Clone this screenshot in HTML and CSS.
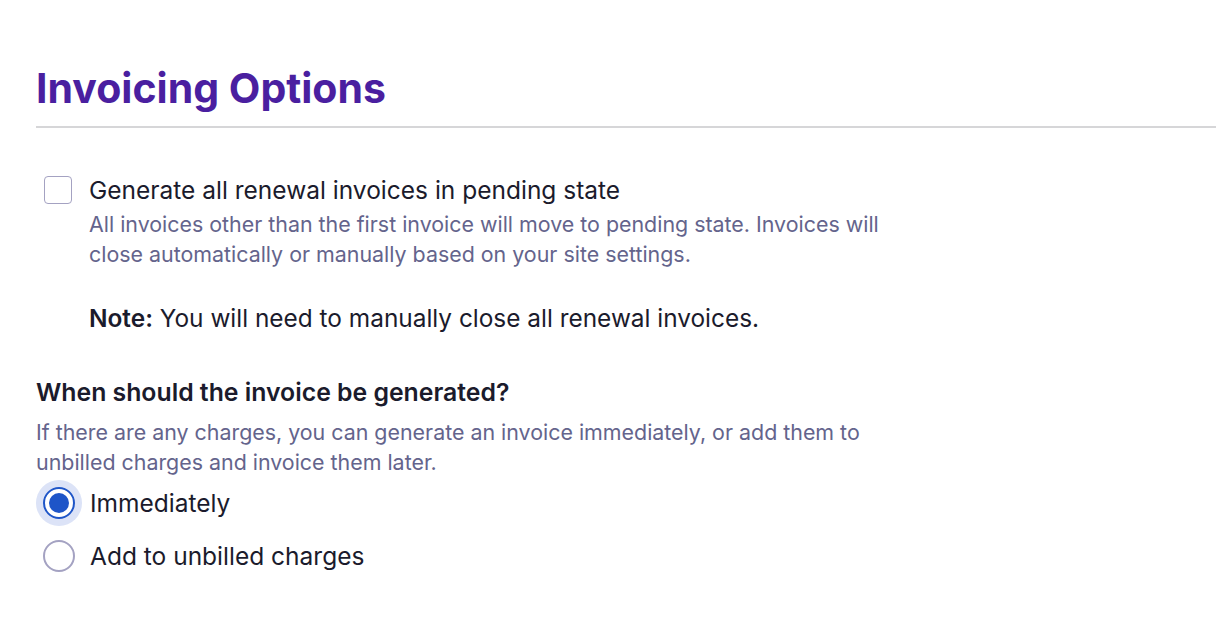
FILE: index.html
```html
<!DOCTYPE html>
<html lang="en">
<head>
  <meta charset="UTF-8" />
  <meta name="viewport" content="width=device-width, initial-scale=1.0"/>
  <title>Invoicing Options</title>
  <link rel="stylesheet" href="styles.css">
</head>
<body>

  <div class="page">
    <h1 class="title">Invoicing Options</h1>

    <div class="check-row">
      <span class="checkbox"></span>
      <div class="check-body">
        <div class="check-label">Generate all renewal invoices in pending state</div>
        <p class="hint">All invoices other than the first invoice will move to pending state. Invoices will close automatically or manually based on your site settings.</p>
        <p class="note"><b>Note:</b> You will need to manually close all renewal invoices.</p>
      </div>
    </div>

    <div class="question">
      <h2>When should the invoice be generated?</h2>
      <p class="hint">If there are any charges, you can generate an invoice immediately, or add them to unbilled charges and invoice them later.</p>

      <div class="radio-row">
        <span class="radio checked"><span class="dot"></span></span>
        <span class="radio-label">Immediately</span>
      </div>
      <div class="radio-row">
        <span class="radio"></span>
        <span class="radio-label">Add to unbilled charges</span>
      </div>
    </div>
  </div>

</body>
</html>
```

FILE: styles.css
```css
body {
  font-family: Inter, 'Noto Sans', sans-serif;
  background: #ffffff;
  margin: 0;
  color: #1b1b2c;
}

.page {
  padding: 62px 0 0 36px;
}

.title {
  font-size: 41px;
  line-height: 52px;
  font-weight: 700;
  color: #4a1fa0;
  margin: 0;
  padding-bottom: 12px;
  border-bottom: 2px solid #d6d6d8;
}

.check-row {
  display: flex;
  gap: 17px;
  margin-top: 46px;
  padding-left: 8px;
}

.checkbox {
  width: 26px;
  height: 26px;
  border: 1.5px solid #a4a2c2;
  border-radius: 4px;
  flex: none;
  margin-top: 2px;
}

.check-label {
  font-size: 24.5px;
  line-height: 32px;
}

.hint {
  font-size: 21.4px;
  line-height: 30px;
  color: #64648c;
  margin: 0;
  max-width: 815px;
}

.check-body .hint {
  margin-top: 3px;
}

.note {
  font-size: 24.4px;
  line-height: 30px;
  margin: 34px 0 0;
}

.note b {
  font-weight: 600;
}

.question {
  margin-top: 44px;
}

.question h2 {
  font-size: 24.8px;
  line-height: 30px;
  font-weight: 600;
  margin: 0 0 10px;
}

.question .hint {
  max-width: 850px;
}

.radio-row {
  display: flex;
  align-items: center;
  gap: 15px;
  height: 53px;
  padding-left: 7px;
}

.question .hint + .radio-row {
  margin-top: -1px;
}

.radio {
  width: 28px;
  height: 28px;
  border: 2px solid #a4a2c2;
  border-radius: 50%;
  flex: none;
  display: flex;
  align-items: center;
  justify-content: center;
}

.radio.checked {
  border-color: #1e55c8;
  box-shadow: 0 0 0 7px #dce3f7;
}

.radio .dot {
  width: 20px;
  height: 20px;
  border-radius: 50%;
  background: #1e55c8;
}

.radio-label {
  font-size: 24.5px;
  line-height: 30px;
}
```
